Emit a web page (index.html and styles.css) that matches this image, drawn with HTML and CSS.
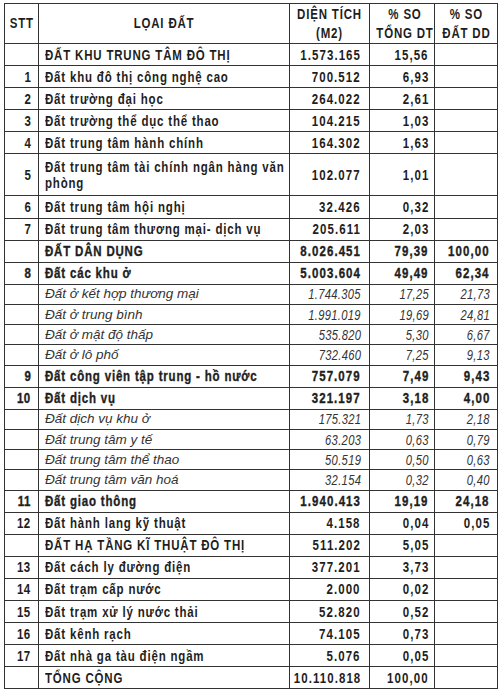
FILE: index.html
```html
<!DOCTYPE html>
<html lang="vi">
<head>
<meta charset="utf-8">
<title>Bảng cân bằng đất đai</title>
<link rel="stylesheet" href="styles.css">
</head>
<body>
<div class="sheet">
<table class="land">
  <colgroup>
    <col class="c-stt"><col class="c-name"><col class="c-area"><col class="c-pt"><col class="c-pd">
  </colgroup>
  <thead>
    <tr class="head">
      <th><span>STT</span></th>
      <th><span>LỌAI ĐẤT</span></th>
      <th><span>DIỆN TÍCH<br>(M2)</span></th>
      <th><span>% SO<br>TỔNG DT</span></th>
      <th><span>% SO<br>ĐẤT DD</span></th>
    </tr>
  </thead>
  <tbody>
    <tr class="grp"><td></td><td class="name"><span>ĐẤT KHU TRUNG TÂM ĐÔ THỊ</span></td><td class="num"><span>1.573.165</span></td><td class="pt"><span>15,56</span></td><td class="pd"></td></tr>
    <tr><td class="stt"><span>1</span></td><td class="name"><span>Đất khu đô thị công nghệ cao</span></td><td class="num"><span>700.512</span></td><td class="pt"><span>6,93</span></td><td class="pd"></td></tr>
    <tr><td class="stt"><span>2</span></td><td class="name"><span>Đất trường đại học</span></td><td class="num"><span>264.022</span></td><td class="pt"><span>2,61</span></td><td class="pd"></td></tr>
    <tr><td class="stt"><span>3</span></td><td class="name"><span>Đất trường thể dục thể thao</span></td><td class="num"><span>104.215</span></td><td class="pt"><span>1,03</span></td><td class="pd"></td></tr>
    <tr><td class="stt"><span>4</span></td><td class="name"><span>Đất trung tâm hành chính</span></td><td class="num"><span>164.302</span></td><td class="pt"><span>1,63</span></td><td class="pd"></td></tr>
    <tr class="double"><td class="stt"><span>5</span></td><td class="name wrap"><span>Đất trung tâm tài chính ngân hàng văn<br>phòng</span></td><td class="num"><span>102.077</span></td><td class="pt"><span>1,01</span></td><td class="pd"></td></tr>
    <tr><td class="stt"><span>6</span></td><td class="name"><span>Đất trung tâm hội nghị</span></td><td class="num"><span>32.426</span></td><td class="pt"><span>0,32</span></td><td class="pd"></td></tr>
    <tr><td class="stt"><span>7</span></td><td class="name"><span>Đất trung tâm thương mại- dịch vụ</span></td><td class="num"><span>205.611</span></td><td class="pt"><span>2,03</span></td><td class="pd"></td></tr>
    <tr class="grp strong"><td></td><td class="name"><span>ĐẤT DÂN DỤNG</span></td><td class="num"><span>8.026.451</span></td><td class="pt"><span>79,39</span></td><td class="pd"><span>100,00</span></td></tr>
    <tr class="strong"><td class="stt"><span>8</span></td><td class="name"><span>Đất các khu ở</span></td><td class="num"><span>5.003.604</span></td><td class="pt"><span>49,49</span></td><td class="pd"><span>62,34</span></td></tr>
    <tr class="sub"><td></td><td class="name"><span>Đất ở kết hợp thương mại</span></td><td class="num"><span>1.744.305</span></td><td class="pt"><span>17,25</span></td><td class="pd"><span>21,73</span></td></tr>
    <tr class="sub"><td></td><td class="name"><span>Đất ở trung bình</span></td><td class="num"><span>1.991.019</span></td><td class="pt"><span>19,69</span></td><td class="pd"><span>24,81</span></td></tr>
    <tr class="sub"><td></td><td class="name"><span>Đất ở mật độ thấp</span></td><td class="num"><span>535.820</span></td><td class="pt"><span>5,30</span></td><td class="pd"><span>6,67</span></td></tr>
    <tr class="sub"><td></td><td class="name"><span>Đất ở lô phố</span></td><td class="num"><span>732.460</span></td><td class="pt"><span>7,25</span></td><td class="pd"><span>9,13</span></td></tr>
    <tr class="strong"><td class="stt"><span>9</span></td><td class="name"><span>Đất công viên tập trung - hồ nước</span></td><td class="num"><span>757.079</span></td><td class="pt"><span>7,49</span></td><td class="pd"><span>9,43</span></td></tr>
    <tr class="strong"><td class="stt"><span>10</span></td><td class="name"><span>Đất dịch vụ</span></td><td class="num"><span>321.197</span></td><td class="pt"><span>3,18</span></td><td class="pd"><span>4,00</span></td></tr>
    <tr class="sub"><td></td><td class="name"><span>Đất dịch vụ khu ở</span></td><td class="num"><span>175.321</span></td><td class="pt"><span>1,73</span></td><td class="pd"><span>2,18</span></td></tr>
    <tr class="sub"><td></td><td class="name"><span>Đất trung tâm y tế</span></td><td class="num"><span>63.203</span></td><td class="pt"><span>0,63</span></td><td class="pd"><span>0,79</span></td></tr>
    <tr class="sub"><td></td><td class="name"><span>Đất trung tâm thể thao</span></td><td class="num"><span>50.519</span></td><td class="pt"><span>0,50</span></td><td class="pd"><span>0,63</span></td></tr>
    <tr class="sub"><td></td><td class="name"><span>Đất trung tâm văn hoá</span></td><td class="num"><span>32.154</span></td><td class="pt"><span>0,32</span></td><td class="pd"><span>0,40</span></td></tr>
    <tr class="strong"><td class="stt"><span>11</span></td><td class="name"><span>Đất giao thông</span></td><td class="num"><span>1.940.413</span></td><td class="pt"><span>19,19</span></td><td class="pd"><span>24,18</span></td></tr>
    <tr><td class="stt"><span>12</span></td><td class="name"><span>Đất hành lang kỹ thuật</span></td><td class="num"><span>4.158</span></td><td class="pt"><span>0,04</span></td><td class="pd"><span>0,05</span></td></tr>
    <tr class="grp"><td></td><td class="name"><span>ĐẤT HẠ TẦNG KĨ THUẬT ĐÔ THỊ</span></td><td class="num"><span>511.202</span></td><td class="pt"><span>5,05</span></td><td class="pd"></td></tr>
    <tr><td class="stt"><span>13</span></td><td class="name"><span>Đất cách ly đường điện</span></td><td class="num"><span>377.201</span></td><td class="pt"><span>3,73</span></td><td class="pd"></td></tr>
    <tr><td class="stt"><span>14</span></td><td class="name"><span>Đất trạm cấp nước</span></td><td class="num"><span>2.000</span></td><td class="pt"><span>0,02</span></td><td class="pd"></td></tr>
    <tr><td class="stt"><span>15</span></td><td class="name"><span>Đất trạm xử lý nước thải</span></td><td class="num"><span>52.820</span></td><td class="pt"><span>0,52</span></td><td class="pd"></td></tr>
    <tr><td class="stt"><span>16</span></td><td class="name"><span>Đất kênh rạch</span></td><td class="num"><span>74.105</span></td><td class="pt"><span>0,73</span></td><td class="pd"></td></tr>
    <tr><td class="stt"><span>17</span></td><td class="name"><span>Đất nhà ga tàu điện ngầm</span></td><td class="num"><span>5.076</span></td><td class="pt"><span>0,05</span></td><td class="pd"></td></tr>
    <tr class="grp"><td></td><td class="name"><span>TỔNG CỘNG</span></td><td class="num"><span>10.110.818</span></td><td class="pt"><span>100,00</span></td><td class="pd"></td></tr>
  </tbody>
</table>
</div>
</body>
</html>
```

FILE: styles.css
```css
html, body {
  margin: 0;
  padding: 0;
  background: #ffffff;
}

.sheet {
  padding: 3px 0 0 4px;
}

.land {
  border-collapse: collapse;
  table-layout: fixed;
  width: 493px;
  font-family: "Liberation Sans", Arial, sans-serif;
  font-size: 14px;
  font-weight: bold;
  color: #1e1e1e;
  letter-spacing: 1px;
}

.c-stt { width: 34px; }
.c-name { width: 251px; }
.c-area { width: 80px; }
.c-pt { width: 65px; }
.c-pd { width: 63px; }

.land th,
.land td {
  border: 1px solid #333333;
  padding: 0;
  height: 21.1px;
  line-height: 16px;
  white-space: nowrap;
  overflow: hidden;
}

/* condensed lettering, like a narrow Helvetica */
.land th > span,
.land td > span {
  display: inline-block;
  transform: scaleX(0.82);
  transform-origin: right center;
  direction: ltr;
}

.land td.name > span {
  transform-origin: left center;
}

.head th {
  height: 39px;
  text-align: center;
  line-height: 19px;
}

.head th > span {
  transform-origin: center center;
}

.stt {
  text-align: right;
  padding-right: 7px !important;
  letter-spacing: 0.5px;
}

.name {
  text-align: left;
  padding-left: 6px !important;
}

/* right-aligned figures overflow toward the left before condensing */
.num,
.pt,
.pd,
.stt {
  direction: rtl;
  text-align: right;
}

.num,
.pt,
.pd {
  letter-spacing: 1.3px;
}

.num { padding-right: 8px !important; }
.pt { padding-right: 5px !important; }
.pd { padding-right: 7px !important; }

.double td {
  height: 41px;
}

.wrap {
  line-height: 22px;
}

.strong td {
  -webkit-text-stroke: 0.35px #1e1e1e;
}

.sub td {
  font-style: italic;
  font-weight: normal;
  font-size: 13.5px;
  letter-spacing: 0;
  color: #333333;
  height: 19.2px;
}

.sub td.name > span {
  transform: none;
}

.sub td.num,
.sub td.pt,
.sub td.pd {
  font-size: 14px;
  letter-spacing: 0.4px;
}

.sub td.num > span,
.sub td.pt > span,
.sub td.pd > span {
  transform: scaleX(0.8);
}
```
